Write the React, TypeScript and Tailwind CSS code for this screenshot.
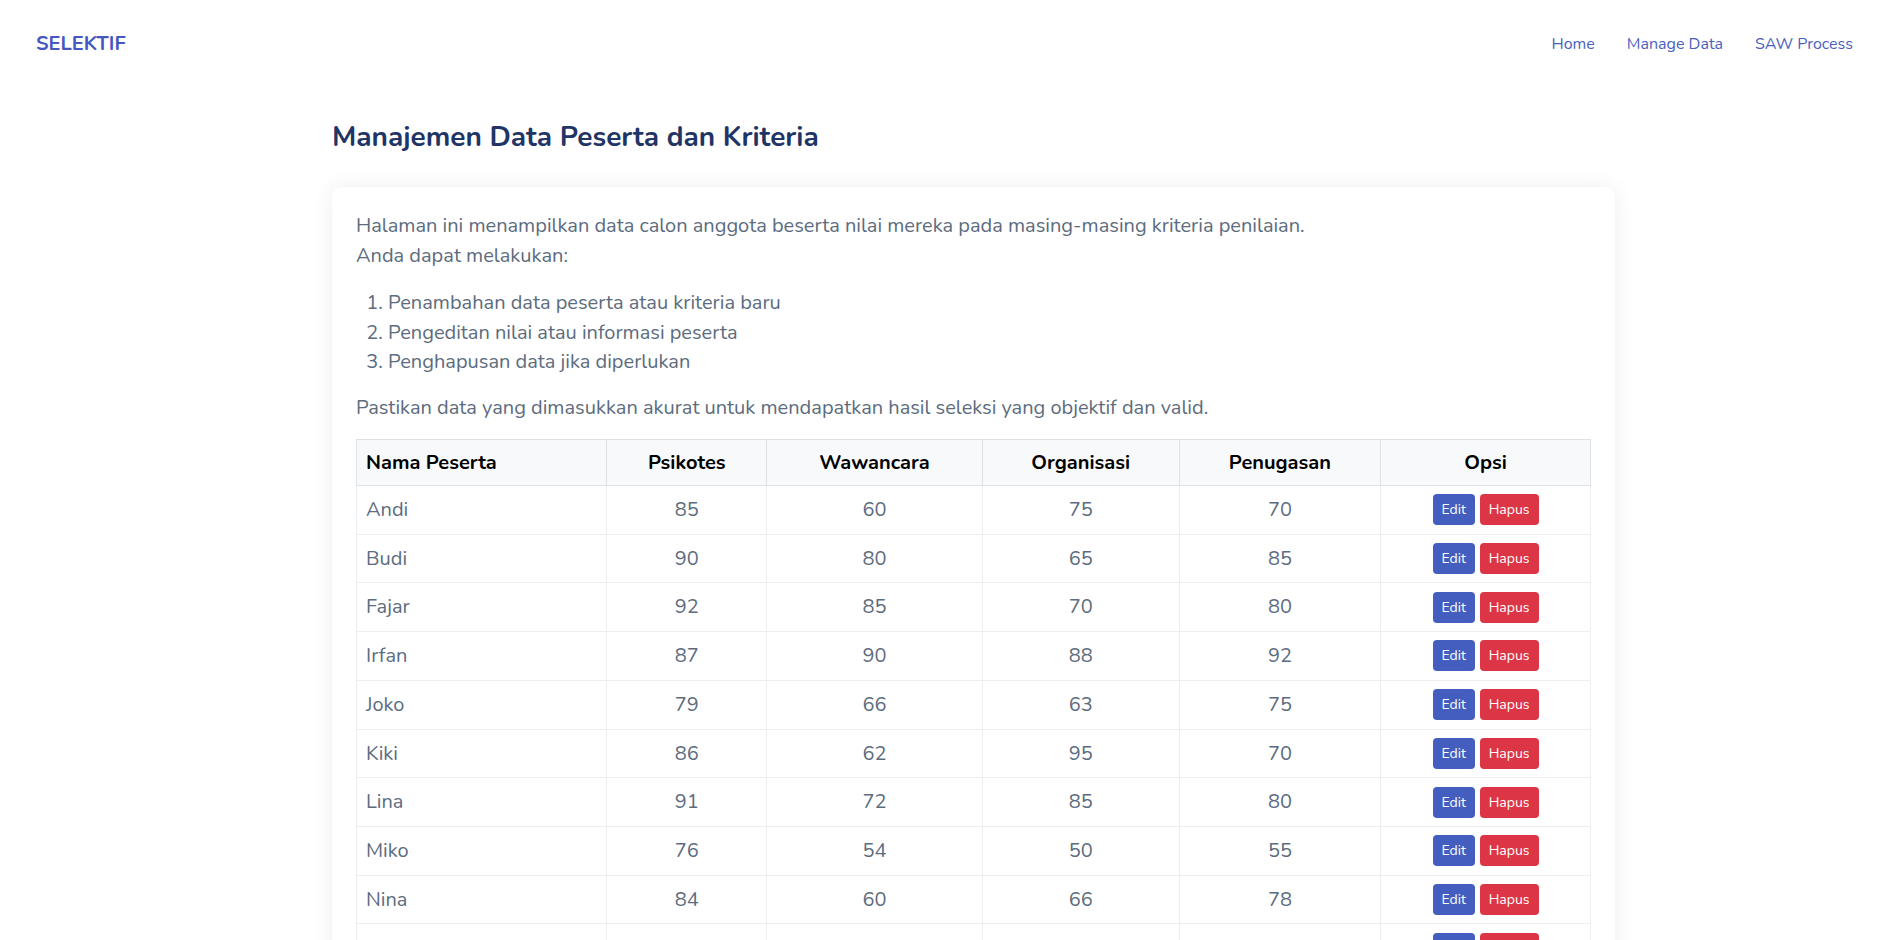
const peserta = [
  { nama: "Andi", psikotes: 85, wawancara: 60, organisasi: 75, penugasan: 70 },
  { nama: "Budi", psikotes: 90, wawancara: 80, organisasi: 65, penugasan: 85 },
  { nama: "Fajar", psikotes: 92, wawancara: 85, organisasi: 70, penugasan: 80 },
  { nama: "Irfan", psikotes: 87, wawancara: 90, organisasi: 88, penugasan: 92 },
  { nama: "Joko", psikotes: 79, wawancara: 66, organisasi: 63, penugasan: 75 },
  { nama: "Kiki", psikotes: 86, wawancara: 62, organisasi: 95, penugasan: 70 },
  { nama: "Lina", psikotes: 91, wawancara: 72, organisasi: 85, penugasan: 80 },
  { nama: "Miko", psikotes: 76, wawancara: 54, organisasi: 50, penugasan: 55 },
  { nama: "Nina", psikotes: 84, wawancara: 60, organisasi: 66, penugasan: 78 },
  { nama: "Oki", psikotes: 88, wawancara: 81, organisasi: 74, penugasan: 69 },
];

const font = "font-['Nunito','Lato','Noto_Sans',sans-serif]";

function Navbar() {
  return (
    <nav className="flex h-[88px] items-center justify-between pl-[36px] pr-[47px]">
      <a className="text-[20px] font-bold text-[#4558c0]">SELEKTIF</a>
      <div className="flex items-center gap-[32px] text-[16px] text-[#4a5fc1]">
        <a>Home</a>
        <a>Manage Data</a>
        <a>SAW Process</a>
      </div>
    </nav>
  );
}

export default function App() {
  return (
    <div className={`${font} min-h-screen bg-white`}>
      <Navbar />

      <main className="ml-[332px] w-[1283px]">
        <h1 className="mb-[31px] mt-[30px] text-[28px] font-bold leading-[38px] text-[#1f3566]">
          Manajemen Data Peserta dan Kriteria
        </h1>

        <div className="rounded-[10px] bg-white p-6 shadow-[0_0_22px_rgba(0,0,0,0.07)]">
          <div className="text-[20px] leading-[29.5px] text-[#5c6c7e]">
            <p className="mb-[18px]">
              Halaman ini menampilkan data calon anggota beserta nilai mereka pada masing-masing kriteria penilaian.
              <br />
              Anda dapat melakukan:
            </p>
            <ol className="mb-[16px] list-decimal pl-[32px]">
              <li>Penambahan data peserta atau kriteria baru</li>
              <li>Pengeditan nilai atau informasi peserta</li>
              <li>Penghapusan data jika diperlukan</li>
            </ol>
            <p className="mb-[17px]">
              Pastikan data yang dimasukkan akurat untuk mendapatkan hasil seleksi yang objektif dan valid.
            </p>
          </div>

          <table className="w-full border-collapse text-[20px]">
            <thead>
              <tr className="bg-[#f8f9fa] text-black">
                <th className="w-[251px] border border-[#dee2e6] px-[9px] py-[9px] text-left font-bold leading-[27px]">Nama Peserta</th>
                <th className="w-[160px] border border-[#dee2e6] px-[9px] py-[9px] text-center font-bold leading-[27px]">Psikotes</th>
                <th className="w-[216px] border border-[#dee2e6] px-[9px] py-[9px] text-center font-bold leading-[27px]">Wawancara</th>
                <th className="w-[197px] border border-[#dee2e6] px-[9px] py-[9px] text-center font-bold leading-[27px]">Organisasi</th>
                <th className="w-[202px] border border-[#dee2e6] px-[9px] py-[9px] text-center font-bold leading-[27px]">Penugasan</th>
                <th className="w-[210px] border border-[#dee2e6] px-[9px] py-[9px] text-center font-bold leading-[27px]">Opsi</th>
              </tr>
            </thead>
            <tbody className="text-[#5c6c7e]">
              {peserta.map((p) => (
                <tr key={p.nama}>
                  <td className="border border-[#eceef0] px-[9px] py-[10px] text-left leading-[27.7px]">{p.nama}</td>
                  <td className="border border-[#eceef0] px-[9px] py-[10px] text-center leading-[27.7px]">{p.psikotes}</td>
                  <td className="border border-[#eceef0] px-[9px] py-[10px] text-center leading-[27.7px]">{p.wawancara}</td>
                  <td className="border border-[#eceef0] px-[9px] py-[10px] text-center leading-[27.7px]">{p.organisasi}</td>
                  <td className="border border-[#eceef0] px-[9px] py-[10px] text-center leading-[27.7px]">{p.penugasan}</td>
                  <td className="border border-[#eceef0] px-[9px] py-[6px]">
                    <div className="flex items-center justify-center gap-[5px]">
                      <button className="h-[31px] w-[42px] rounded-[4px] bg-[#435ebe] text-[14px] text-white">Edit</button>
                      <button className="h-[31px] w-[59px] rounded-[4px] bg-[#dc3545] text-[14px] text-white">Hapus</button>
                    </div>
                  </td>
                </tr>
              ))}
            </tbody>
          </table>
        </div>
      </main>
    </div>
  );
}
